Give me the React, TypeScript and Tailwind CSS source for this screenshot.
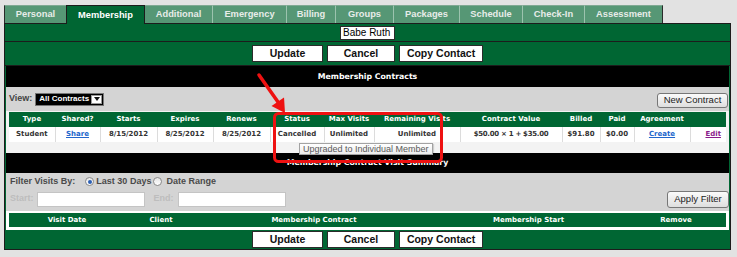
const tabs = [
  { label: "Personal", cls: "w-[62px] border-l border-l-[#2a2a2a]" },
  { label: "Membership", cls: "w-[79px]", active: true },
  { label: "Additional", cls: "w-[67px]" },
  { label: "Emergency", cls: "w-[74px] border-l border-l-[#9cc3ae]" },
  { label: "Billing", cls: "w-[49px] border-l border-l-[#9cc3ae]" },
  { label: "Groups", cls: "w-[58px] border-l border-l-[#9cc3ae]" },
  { label: "Packages", cls: "w-[66px] border-l border-l-[#9cc3ae]" },
  { label: "Schedule", cls: "w-[63px] border-l border-l-[#9cc3ae]" },
  { label: "Check-In", cls: "w-[62px] border-l border-l-[#9cc3ae]" },
  { label: "Assessment", cls: "w-[79px] border-l border-r border-l-[#9cc3ae] border-r-[#2a2a2a]" },
];

function ActionButtons() {
  return (
    <div className="flex items-center justify-center gap-[4px]">
      <button className="h-[17px] w-[71px] border border-[#2b2b2b] bg-white text-[10.5px] font-bold text-[#111]">
        Update
      </button>
      <button className="h-[17px] w-[68px] border border-[#2b2b2b] bg-white text-[10.5px] font-bold text-[#111]">
        Cancel
      </button>
      <button className="h-[17px] w-[84px] border border-[#2b2b2b] bg-white text-[10.5px] font-bold text-[#111]">
        Copy Contact
      </button>
    </div>
  );
}

function Radio({ checked }: { checked?: boolean }) {
  return (
    <span className="flex h-[9px] w-[9px] items-center justify-center rounded-full border border-[#8a8a8a] bg-gradient-to-b from-[#e6e6e6] to-white">
      {checked && <span className="h-[4px] w-[4px] rounded-full bg-[#2b5fb4]" />}
    </span>
  );
}

export default function App() {
  return (
    <div className="relative h-[257px] w-[737px] overflow-hidden bg-[#e2e2e2] pl-[4px] pt-[5px] font-['Liberation_Sans',Arial,sans-serif]">
      <div className="w-[727px]">
        {/* tabs */}
        <div className="flex h-[18px] items-stretch">
          {tabs.map((t) =>
            t.active ? (
              <div
                key={t.label}
                className="relative z-10 -mb-px flex h-[19px] w-[79px] items-center justify-center border-x border-t border-[#1c1c1c] bg-[#006633] pt-[2px] text-[9.3px] font-bold text-white"
              >
                {t.label}
              </div>
            ) : (
              <div
                key={t.label}
                className={`flex items-center justify-center border-t border-t-[#7fa892] bg-[#569775] text-[9.3px] font-bold text-[#e8ece9] ${t.cls}`}
              >
                {t.label}
              </div>
            )
          )}
        </div>

        <div className="border border-[#1c1c1c] bg-[#006633]">
          {/* name */}
          <div className="flex h-[18px] items-center justify-center border-b border-[#1c1c1c]">
            <div className="flex h-[14px] w-[55px] items-center border border-[#2b2b2b] bg-white px-[2px] text-[10px] leading-none text-black">
              Babe Ruth
            </div>
          </div>

          <div className="flex h-[24px] items-center justify-center border-b border-[#1c1c1c]">
            <ActionButtons />
          </div>

          <div className="mx-px bg-[#d4d4d4]">
            <div className="flex h-[21px] items-center justify-center bg-black font-['DejaVu_Sans',sans-serif] text-[7.8px] font-bold text-white">
              Membership Contracts
            </div>

            <div className="flex h-[24px] items-center justify-between pl-[3px] pr-px">
              <div className="flex items-center gap-[3px]">
                <span className="text-[9px] font-bold text-[#444]">View:</span>
                <div className="flex h-[13px] w-[69px] items-center justify-between border border-[#777] bg-black pl-[3px] pr-px">
                  <span className="text-[8px] font-bold leading-none text-white">All Contracts</span>
                  <span className="flex h-[9px] w-[11px] items-center justify-center border border-[#999] bg-white">
                    <svg width="6" height="4" viewBox="0 0 6 4">
                      <path d="M0 0h6L3 4z" fill="#111" />
                    </svg>
                  </span>
                </div>
              </div>
              <button className="mt-[2px] h-[15px] w-[71px] rounded-[3px] border border-[#777] bg-gradient-to-b from-[#fbfbfb] to-[#dedede] text-[9.5px] leading-none text-[#222]">
                New Contract
              </button>
            </div>

            <div className="h-[42px] bg-[#f3f3f3] px-[3px] pt-px">
              <table className="w-[717px] table-fixed border-collapse font-['DejaVu_Sans',sans-serif] text-[7px] font-bold">
                <colgroup>
                  <col className="w-[46px]" />
                  <col className="w-[45px]" />
                  <col className="w-[57px]" />
                  <col className="w-[56px]" />
                  <col className="w-[57px]" />
                  <col className="w-[54px]" />
                  <col className="w-[50px]" />
                  <col className="w-[86px]" />
                  <col className="w-[102px]" />
                  <col className="w-[38px]" />
                  <col className="w-[34px]" />
                  <col className="w-[56px]" />
                  <col className="w-[36px]" />
                </colgroup>
                <thead>
                  <tr className="h-[15px] bg-[#006633] text-white">
                    <th className="font-bold">Type</th>
                    <th className="font-bold">Shared?</th>
                    <th className="font-bold">Starts</th>
                    <th className="font-bold">Expires</th>
                    <th className="font-bold">Renews</th>
                    <th className="font-bold">Status</th>
                    <th className="font-bold">Max Visits</th>
                    <th className="font-bold">Remaining Visits</th>
                    <th className="font-bold">Contract Value</th>
                    <th className="font-bold">Billed</th>
                    <th className="font-bold">Paid</th>
                    <th className="font-bold">Agreement</th>
                    <th />
                  </tr>
                </thead>
                <tbody>
                  <tr className="h-[15px] bg-white text-center text-[#333]">
                    <td className="border-r border-[#dcdcdc]">Student</td>
                    <td className="border-r border-[#dcdcdc]">
                      <span className="text-[#2266cc] underline">Share</span>
                    </td>
                    <td className="border-r border-[#dcdcdc]">8/15/2012</td>
                    <td className="border-r border-[#dcdcdc]">8/25/2012</td>
                    <td className="border-r border-[#dcdcdc]">8/25/2012</td>
                    <td className="border-r border-[#dcdcdc]">Cancelled</td>
                    <td className="border-r border-[#dcdcdc]">Unlimited</td>
                    <td className="border-r border-[#dcdcdc]">Unlimited</td>
                    <td className="whitespace-nowrap border-r border-[#dcdcdc] tracking-[-0.3px]">
                      $50.00 × 1 + $35.00
                    </td>
                    <td className="border-r border-[#dcdcdc]">$91.80</td>
                    <td className="border-r border-[#dcdcdc]">$0.00</td>
                    <td className="border-r border-[#dcdcdc]">
                      <span className="text-[#2266cc] underline">Create</span>
                    </td>
                    <td className="pr-[5px] text-right">
                      <span className="text-[#8a1a8a] underline">Edit</span>
                    </td>
                  </tr>
                </tbody>
              </table>
            </div>

            <div className="flex h-[20px] items-center justify-center bg-black font-['DejaVu_Sans',sans-serif] text-[7.8px] font-bold text-white">
              Membership Contract Visit Summary
            </div>

            <div className="h-[38px] pl-[4px] pt-[2px]">
              <div className="flex h-[13px] items-center text-[9px] font-bold text-[#4a4a4a]">
                <span>Filter Visits By:</span>
                <span className="ml-[10px] mr-[2px]">
                  <Radio checked />
                </span>
                <span>Last 30 Days</span>
                <span className="ml-[2px] mr-[4px]">
                  <Radio />
                </span>
                <span>Date Range</span>
              </div>
              <div className="mt-[2px] flex h-[18px] items-center justify-between">
                <div className="flex items-center text-[9px] font-bold text-[#bdbdbd]">
                  <span>Start:</span>
                  <span className="ml-[3px] h-[15px] w-[108px] border border-[#c4c4c4] bg-white" />
                  <span className="ml-[9px]">End:</span>
                  <span className="ml-[4px] h-[15px] w-[108px] border border-[#c4c4c4] bg-white" />
                </div>
                <button className="h-[17px] w-[62px] rounded-[3px] border border-[#777] bg-gradient-to-b from-[#fbfbfb] to-[#dedede] text-[9.5px] leading-none text-[#222]">
                  Apply Filter
                </button>
              </div>
            </div>

            <div className="h-[19px] bg-white px-[3px] py-[2px]">
              <table className="w-[717px] table-fixed border-collapse font-['DejaVu_Sans',sans-serif] text-[7px] font-bold text-white">
                <colgroup>
                  <col className="w-[116px]" />
                  <col className="w-[72px]" />
                  <col className="w-[234px]" />
                  <col className="w-[195px]" />
                  <col className="w-[100px]" />
                </colgroup>
                <thead>
                  <tr className="h-[14px] bg-[#006633]">
                    <th className="font-bold">Visit Date</th>
                    <th className="font-bold">Client</th>
                    <th className="font-bold">Membership Contract</th>
                    <th className="font-bold">Membership Start</th>
                    <th className="font-bold">Remove</th>
                  </tr>
                </thead>
              </table>
            </div>
          </div>

          <div className="flex h-[19px] items-center justify-center">
            <ActionButtons />
          </div>
        </div>
      </div>

      {/* tooltip */}
      <div className="absolute left-[299px] top-[143px] flex h-[12px] w-[134px] items-center border border-[#a3a3a3] bg-gradient-to-b from-white to-[#ececec] px-[3px] text-[9px] leading-none text-[#5a5a5a] shadow-[1px_1px_1px_rgba(0,0,0,0.15)]">
        Upgraded to Individual Member
      </div>

      {/* annotation */}
      <svg className="pointer-events-none absolute left-0 top-0" width="737" height="257" viewBox="0 0 737 257">
        <rect x="274.5" y="113.5" width="167" height="48" rx="4" fill="none" stroke="#ee1111" strokeWidth="3" />
        <line x1="259" y1="75" x2="278" y2="102" stroke="#ee1111" strokeWidth="3.5" strokeLinecap="round" />
        <polygon points="285,113 271.5,106 284,97.5" fill="#ee1111" />
      </svg>
    </div>
  );
}
